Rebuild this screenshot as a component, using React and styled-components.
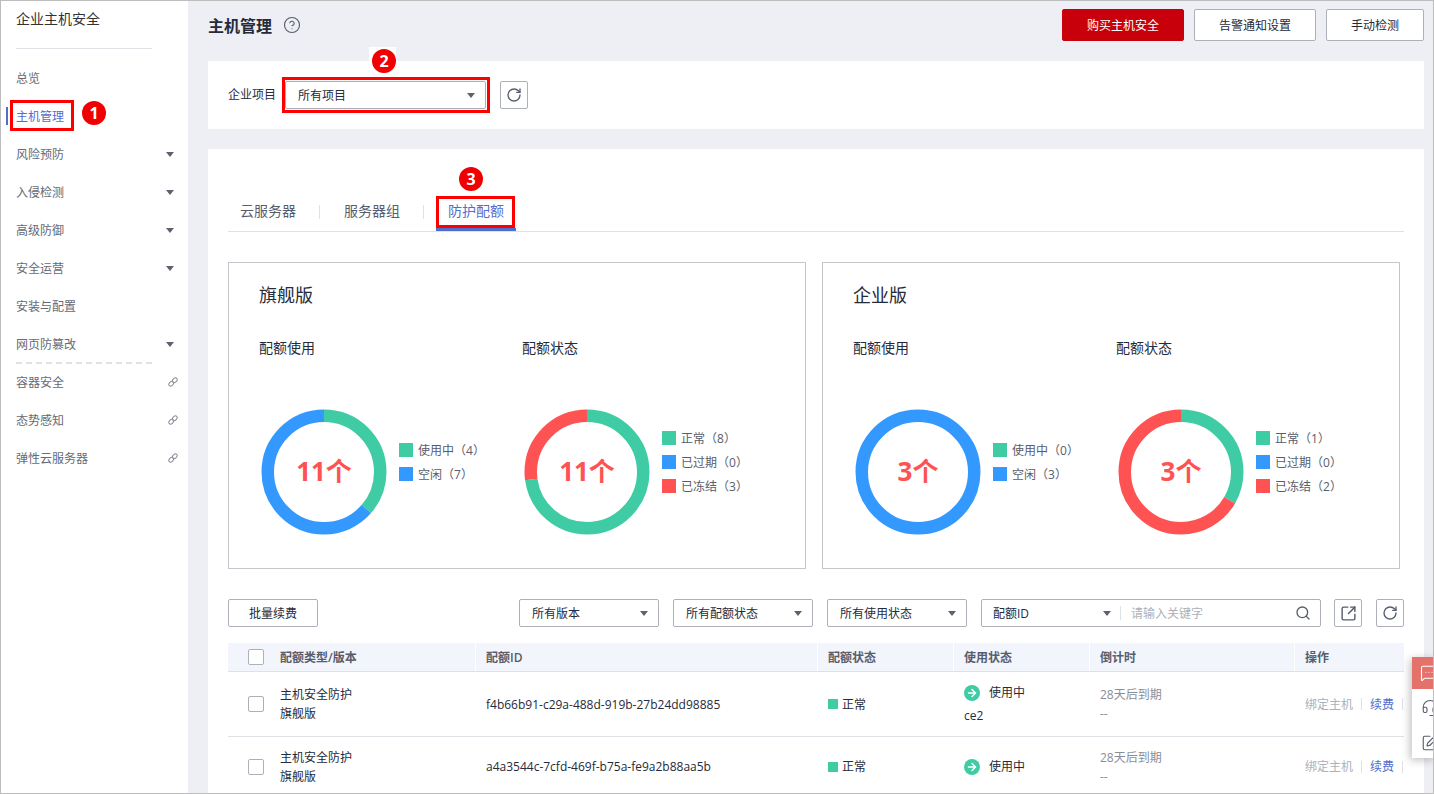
import React from 'react';
import styled, { createGlobalStyle } from 'styled-components';
import {
  CircleHelp,
  RotateCw,
  Search,
  SquareArrowOutUpRight,
  ArrowRight,
  MessageSquareMore,
  Headset,
  SquarePen,
} from 'lucide-react';

const GREEN = '#3fcca5';
const BLUE = '#3399ff';
const RED = '#ff5252';

const GlobalStyle = createGlobalStyle`
  html, body { margin: 0; padding: 0; background: #fff; }
  body {
    font-family: "Open Sans", "Noto Sans CJK SC", sans-serif;
    font-size: 12px;
    color: #252b3a;
  }
  * { box-sizing: border-box; }
`;

const Frame = styled.div`
  position: relative;
  width: 1434px;
  height: 794px;
  display: flex;
  overflow: hidden;
  border: 1px solid #bdbdbd;
  background: #eeeff5;
`;

/* sidebar */
const Sidebar = styled.aside`
  width: 187px;
  flex: none;
  background: #fff;
`;

const SideTitle = styled.div`
  margin: 0 36px 0 15px;
  height: 48px;
  padding-top: 8px;
  font-size: 14px;
  line-height: 20px;
  border-bottom: 1px solid #dfe1e6;
  color: #333;
`;

const NavList = styled.nav`
  margin-top: 10px;
`;

const NavItem = styled.div`
  position: relative;
  height: 38px;
  padding: 0 10px 0 15px;
  display: flex;
  align-items: center;
  justify-content: space-between;
  color: ${(p) => (p.$active ? '#526ecc' : '#666a75')};
  &::before {
    content: ${(p) => (p.$active ? '""' : 'none')};
    position: absolute;
    left: 5px;
    top: 10px;
    width: 2px;
    height: 18px;
    background: #526ecc;
  }
`;

const NavDivider = styled.div`
  height: 0;
  margin: -1px 36px -1px 15px;
  border-top: 2px dashed #dfe1e6;
`;

const Caret = styled.span`
  flex: none;
  width: 0;
  height: 0;
  border-left: 4.5px solid transparent;
  border-right: 4.5px solid transparent;
  border-top: 5px solid #5e6270;
  margin-right: ${(p) => p.$gap || 0}px;
`;

const ExtLinkSvg = styled.svg`
  flex: none;
  width: 10px;
  height: 10px;
`;

const ExtLink = () => (
  <ExtLinkSvg viewBox="0 0 10 10" fill="none" stroke="#8a8e99" strokeWidth="1">
    <ellipse cx="3.2" cy="6.8" rx="2.7" ry="1.9" transform="rotate(-45 3.2 6.8)" />
    <ellipse cx="6.8" cy="3.2" rx="2.7" ry="1.9" transform="rotate(-45 6.8 3.2)" />
  </ExtLinkSvg>
);

/* main column */
const Main = styled.main`
  flex: 1;
  min-width: 0;
  padding: 0 9px 0 20px;
`;

const PageHeader = styled.header`
  height: 60px;
  padding-top: 8px;
  display: flex;
  justify-content: space-between;
  align-items: flex-start;
`;

const PageTitle = styled.h1`
  margin: 0;
  height: 32px;
  display: flex;
  align-items: center;
  gap: 11px;
  font-size: 16px;
  font-weight: 700;
  color: #252b3a;
  svg {
    width: 18px;
    height: 18px;
    color: #575d6c;
  }
`;

const HeaderActions = styled.div`
  display: flex;
  gap: 10px;
`;

const Button = styled.button`
  width: ${(p) => p.$w}px;
  height: ${(p) => p.$h || 32}px;
  padding: 0;
  font: inherit;
  font-size: 12px;
  border-radius: 2px;
  border: 1px solid ${(p) => (p.$primary ? '#c7000b' : '#adb0b8')};
  background: ${(p) => (p.$primary ? '#c7000b' : '#fff')};
  color: ${(p) => (p.$primary ? '#fff' : '#252b3a')};
`;

const IconButton = styled.button`
  width: 28px;
  height: 28px;
  padding: 0;
  flex: none;
  display: flex;
  align-items: center;
  justify-content: center;
  background: #fff;
  border: 1px solid #adb0b8;
  border-radius: 2px;
  color: #575d6c;
  svg {
    width: ${(p) => p.$icon || 16}px;
    height: ${(p) => p.$icon || 16}px;
  }
`;

const Card = styled.section`
  background: #fff;
  margin-top: ${(p) => p.$top || 0}px;
  padding: ${(p) => p.$pad};
`;

const ProjectBar = styled.div`
  display: flex;
  align-items: flex-start;
  gap: 14px;
`;

const ProjectLabel = styled.label`
  width: 57px;
  margin-top: 5px;
  line-height: 18px;
  color: #252b3a;
  margin-right: -14px;
`;

const SelectBox = styled.div`
  position: relative;
  width: ${(p) => p.$w}px;
  height: 28px;
  flex: none;
  padding: 0 10px 0 12px;
  display: flex;
  align-items: center;
  justify-content: space-between;
  border: 1px solid #adb0b8;
  border-radius: 2px;
  background: #fff;
  color: #252b3a;
`;

const CalloutBox = styled.span`
  position: absolute;
  left: ${(p) => p.$x}px;
  top: ${(p) => p.$y}px;
  width: ${(p) => p.$w}px;
  height: ${(p) => p.$h}px;
  border: 3px solid #ff0000;
  pointer-events: none;
  z-index: 3;
`;

const Badge = styled.span`
  position: absolute;
  left: ${(p) => p.$x}px;
  top: ${(p) => p.$y}px;
  width: 24px;
  height: 24px;
  border-radius: 50%;
  background: #f00000;
  color: #fff;
  font-size: 16px;
  font-weight: 700;
  line-height: 24px;
  text-align: center;
  z-index: 4;
`;

const BadgeNotch = styled.span`
  position: absolute;
  left: 83px;
  top: -35px;
  width: 27px;
  height: 15px;
  background: #fff;
`;

/* tabs */
const TabBar = styled.div`
  display: flex;
  align-items: center;
  border-bottom: 1px solid #dfe1e6;
`;

const TabHolder = styled.div`
  position: relative;
`;

const Tab = styled.div`
  width: 80px;
  height: 34px;
  padding-bottom: 5px;
  display: flex;
  align-items: center;
  justify-content: center;
  font-size: 14px;
  color: ${(p) => (p.$active ? '#526ecc' : '#575d6c')};
  border-bottom: 3px solid ${(p) => (p.$active ? '#526ecc' : 'transparent')};
`;

const TabDivider = styled.span`
  width: 1px;
  height: 14px;
  margin: 0 12px 5px 11px;
  background: #dfe1e6;
`;

/* quota panels */
const PanelRow = styled.div`
  margin-top: 30px;
  display: flex;
  gap: 16px;
`;

const Panel = styled.div`
  width: 578px;
  height: 307px;
  padding: 20px 0 0 30px;
  border: 1px solid #c4c6cc;
`;

const PanelTitle = styled.h2`
  margin: 0;
  font-size: 18px;
  font-weight: 400;
  line-height: 24px;
  color: #252b3a;
`;

const ChartGrid = styled.div`
  margin-top: 32px;
  display: grid;
  grid-template-columns: 263px 263px;
`;

const ChartLabel = styled.div`
  height: 18px;
  font-size: 14px;
  line-height: 18px;
  color: #252b3a;
`;

const ChartBody = styled.div`
  margin: 52px 0 0 2px;
  display: flex;
  align-items: center;
  gap: 12px;
`;

const DonutWrap = styled.div`
  position: relative;
  width: 126px;
  height: 126px;
  flex: none;
`;

const DonutValue = styled.div`
  position: absolute;
  inset: 0 0 5px;
  display: flex;
  align-items: center;
  justify-content: center;
  font-size: 26px;
  font-weight: 700;
  color: ${RED};
`;

const Legend = styled.ul`
  margin: 0 0 20px;
  padding: 0;
  list-style: none;
`;

const LegendItem = styled.li`
  height: 24px;
  display: flex;
  align-items: center;
  gap: 5px;
  white-space: nowrap;
  color: #575d6c;
`;

const Swatch = styled.i`
  flex: none;
  width: ${(p) => p.$size}px;
  height: ${(p) => p.$size}px;
  background: ${(p) => p.$color};
`;

/* table toolbar */
const Toolbar = styled.div`
  margin-top: 30px;
  display: flex;
  align-items: center;
  gap: 14px;
`;

const ToolbarSpacer = styled.div`
  flex: 1;
`;

const SearchBox = styled.div`
  width: 340px;
  height: 28px;
  display: flex;
  align-items: center;
  border: 1px solid #adb0b8;
  border-radius: 2px;
  margin-right: -1px;
  padding-left: 11px;
`;

const SearchType = styled.div`
  width: 128px;
  display: flex;
  align-items: center;
  justify-content: space-between;
  padding-right: 9px;
  height: 14px;
  border-right: 1px solid #dfe1e6;
  margin-right: 10px;
`;

const Placeholder = styled.span`
  flex: 1;
  color: #adb0b8;
`;

const SearchIcon = styled(Search)`
  width: 16px;
  height: 16px;
  margin-right: 9px;
  color: #575d6c;
`;

/* table */
const columns = '247px 342px 136px 136px 205px 110px';

const Table = styled.div`
  margin-top: 16px;
`;

const HeadRow = styled.div`
  display: grid;
  grid-template-columns: ${columns};
  height: 29px;
  background: #f2f5fc;
  border-bottom: 1px solid #dfe1e6;
  font-weight: 600;
  color: #575d6c;
`;

const HeadCell = styled.div`
  display: flex;
  align-items: center;
  padding-left: 10px;
  border-left: 1px solid #fff;
`;

const Row = styled.div`
  display: grid;
  grid-template-columns: ${columns};
  height: ${(p) => p.$h}px;
  border-bottom: 1px solid #dfe1e6;
  color: #252b3a;
`;

const Cell = styled.div`
  display: flex;
  flex-direction: ${(p) => (p.$stack ? 'column' : 'row')};
  justify-content: ${(p) => (p.$stack ? 'center' : 'flex-start')};
  align-items: ${(p) => (p.$stack ? 'flex-start' : 'center')};
  padding-left: 11px;
  line-height: 19px;
  white-space: nowrap;
  color: ${(p) => (p.$muted ? '#8a8e99' : 'inherit')};
`;

const CheckCell = styled.div`
  display: flex;
  align-items: center;
  gap: 16px;
  padding-left: 20px;
  line-height: 19px;
`;

const Checkbox = styled.span`
  flex: none;
  width: 16px;
  height: 16px;
  border: 1px solid #adb0b8;
  border-radius: 2px;
  background: #fff;
`;

const StatusText = styled.span`
  margin-left: 4px;
`;

const UseLine = styled.div`
  display: flex;
  align-items: center;
  gap: 9px;
`;

const UseIcon = styled.span`
  width: 16px;
  height: 16px;
  border-radius: 50%;
  background: ${GREEN};
  color: #fff;
  display: flex;
  align-items: center;
  justify-content: center;
  svg {
    width: 12px;
    height: 12px;
    stroke-width: 3;
  }
`;

const HostName = styled.div`
  margin-top: 4px;
`;

const ActionLink = styled.a`
  color: ${(p) => (p.$disabled ? '#adb0b8' : '#526ecc')};
`;

const ActionDivider = styled.span`
  width: 1px;
  height: 12px;
  margin: 0 8px;
  background: #dfe1e6;
  flex: none;
`;

/* floating help widget */
const FloatWidget = styled.div`
  position: absolute;
  left: 1411px;
  top: 656px;
  width: 24px;
  height: 101px;
  background: #fff;
  box-shadow: -2px 2px 8px rgba(0, 0, 0, 0.25);
  z-index: 5;
  overflow: hidden;
`;

const FloatButton = styled.div`
  height: ${(p) => p.$h}px;
  padding-left: ${(p) => (p.$accent ? 8 : 9)}px;
  display: flex;
  align-items: center;
  background: ${(p) => (p.$accent ? '#e5726a' : 'transparent')};
  color: ${(p) => (p.$accent ? '#fff' : '#575d6c')};
  svg {
    flex: none;
    width: 18px;
    height: 18px;
  }
`;

const Donut = ({ total, parts, label }) => {
  const r = 56.25;
  const len = 2 * Math.PI * r;
  let used = 0;
  return (
    <DonutWrap>
      <svg width="126" height="126" viewBox="0 0 126 126">
        <g transform="rotate(-90 63 63)" fill="none" strokeWidth="12.5">
          {parts.map((part) => {
            const seg = (part.value / total) * len;
            const el = (
              <circle
                key={part.color}
                cx="63"
                cy="63"
                r={r}
                stroke={part.color}
                strokeDasharray={`${seg} ${len - seg}`}
                strokeDashoffset={-used}
              />
            );
            used += seg;
            return el;
          })}
        </g>
      </svg>
      <DonutValue>{label}</DonutValue>
    </DonutWrap>
  );
};

const ChartBlock = ({ title, total, label, items }) => (
  <div>
    <ChartLabel>{title}</ChartLabel>
    <ChartBody>
      <Donut total={total} label={label} parts={items.filter((i) => i.value > 0)} />
      <Legend>
        {items.map((i) => (
          <LegendItem key={i.name}>
            <Swatch $size={14} $color={i.color} />
            {i.name}（{i.value}）
          </LegendItem>
        ))}
      </Legend>
    </ChartBody>
  </div>
);

const QuotaPanel = ({ title, count, free, inUse, normal, frozen }) => (
  <Panel>
    <PanelTitle>{title}</PanelTitle>
    <ChartGrid>
      <ChartBlock
        title="配额使用"
        total={count}
        label={`${count}个`}
        items={[
          { name: '使用中', value: inUse, color: GREEN },
          { name: '空闲', value: free, color: BLUE },
        ]}
      />
      <ChartBlock
        title="配额状态"
        total={count}
        label={`${count}个`}
        items={[
          { name: '正常', value: normal, color: GREEN },
          { name: '已过期', value: 0, color: BLUE },
          { name: '已冻结', value: frozen, color: RED },
        ]}
      />
    </ChartGrid>
  </Panel>
);

const navItems = [
  { name: '总览' },
  { name: '主机管理', active: true },
  { name: '风险预防', caret: true },
  { name: '入侵检测', caret: true },
  { name: '高级防御', caret: true },
  { name: '安全运营', caret: true },
  { name: '安装与配置' },
  { name: '网页防篡改', caret: true },
];

const extItems = ['容器安全', '态势感知', '弹性云服务器'];

const rows = [
  { id: 'f4b66b91-c29a-488d-919b-27b24dd98885', host: 'ce2', h: 65 },
  { id: 'a4a3544c-7cfd-469f-b75a-fe9a2b88aa5b', h: 60 },
];

const App = () => (
  <>
    <GlobalStyle />
    <Frame>
      <Sidebar>
        <SideTitle>企业主机安全</SideTitle>
        <NavList>
          {navItems.map((item) => (
            <NavItem key={item.name} $active={item.active}>
              {item.name}
              {item.caret && <Caret $gap={4} />}
              {item.active && (
                <>
                  <CalloutBox $x={9} $y={3} $w={64} $h={31} />
                  <Badge $x={81} $y={4}>1</Badge>
                </>
              )}
            </NavItem>
          ))}
          <NavDivider />
          {extItems.map((name) => (
            <NavItem key={name}>
              {name}
              <ExtLink />
            </NavItem>
          ))}
        </NavList>
      </Sidebar>

      <Main>
        <PageHeader>
          <PageTitle>
            主机管理
            <CircleHelp strokeWidth={1.5} />
          </PageTitle>
          <HeaderActions>
            <Button $primary $w={122}>购买主机安全</Button>
            <Button $w={122}>告警通知设置</Button>
            <Button $w={98}>手动检测</Button>
          </HeaderActions>
        </PageHeader>

        <Card $pad="20px">
          <ProjectBar>
            <ProjectLabel>企业项目</ProjectLabel>
            <SelectBox $w={201}>
              所有项目
              <Caret />
              <CalloutBox $x={-4} $y={-5} $w={208} $h={36} />
              <Badge $x={86} $y={-33}>2</Badge>
              <BadgeNotch />
            </SelectBox>
            <IconButton>
              <RotateCw />
            </IconButton>
          </ProjectBar>
        </Card>

        <Card $top={20} $pad="48px 20px 0">
          <TabBar>
            <Tab>云服务器</Tab>
            <TabDivider />
            <Tab>服务器组</Tab>
            <TabDivider />
            <TabHolder>
              <Tab $active>防护配额</Tab>
              <CalloutBox $x={0} $y={-1} $w={79} $h={32} />
              <Badge $x={23} $y={-30}>3</Badge>
            </TabHolder>
          </TabBar>

          <PanelRow>
            <QuotaPanel title="旗舰版" count={11} inUse={4} free={7} normal={8} frozen={3} />
            <QuotaPanel title="企业版" count={3} inUse={0} free={3} normal={1} frozen={2} />
          </PanelRow>

          <Toolbar>
            <Button $w={90} $h={28}>批量续费</Button>
            <ToolbarSpacer />
            <SelectBox $w={140}>所有版本<Caret /></SelectBox>
            <SelectBox $w={140}>所有配额状态<Caret /></SelectBox>
            <SelectBox $w={140}>所有使用状态<Caret /></SelectBox>
            <SearchBox>
              <SearchType>配额ID<Caret /></SearchType>
              <Placeholder>请输入关键字</Placeholder>
              <SearchIcon />
            </SearchBox>
            <IconButton $icon={17}>
              <SquareArrowOutUpRight />
            </IconButton>
            <IconButton>
              <RotateCw />
            </IconButton>
          </Toolbar>

          <Table>
            <HeadRow>
              <CheckCell>
                <Checkbox />
                配额类型/版本
              </CheckCell>
              <HeadCell>配额ID</HeadCell>
              <HeadCell>配额状态</HeadCell>
              <HeadCell>使用状态</HeadCell>
              <HeadCell>倒计时</HeadCell>
              <HeadCell>操作</HeadCell>
            </HeadRow>
            {rows.map((row) => (
              <Row key={row.id} $h={row.h}>
                <CheckCell>
                  <Checkbox />
                  <div>
                    主机安全防护
                    <br />
                    旗舰版
                  </div>
                </CheckCell>
                <Cell>{row.id}</Cell>
                <Cell>
                  <Swatch $size={10} $color={GREEN} />
                  <StatusText>正常</StatusText>
                </Cell>
                <Cell $stack>
                  <UseLine>
                    <UseIcon>
                      <ArrowRight />
                    </UseIcon>
                    使用中
                  </UseLine>
                  {row.host && <HostName>{row.host}</HostName>}
                </Cell>
                <Cell $stack $muted>
                  <div>28天后到期</div>
                  <div>--</div>
                </Cell>
                <Cell>
                  <ActionLink $disabled>绑定主机</ActionLink>
                  <ActionDivider />
                  <ActionLink>续费</ActionLink>
                  <ActionDivider />
                </Cell>
              </Row>
            ))}
          </Table>
        </Card>
      </Main>

      <FloatWidget>
        <FloatButton $accent $h={32}>
          <MessageSquareMore strokeWidth={1.5} />
        </FloatButton>
        <FloatButton $h={38}>
          <Headset strokeWidth={1.5} />
        </FloatButton>
        <FloatButton $h={31}>
          <SquarePen strokeWidth={1.5} />
        </FloatButton>
      </FloatWidget>
    </Frame>
  </>
);

export default App;
